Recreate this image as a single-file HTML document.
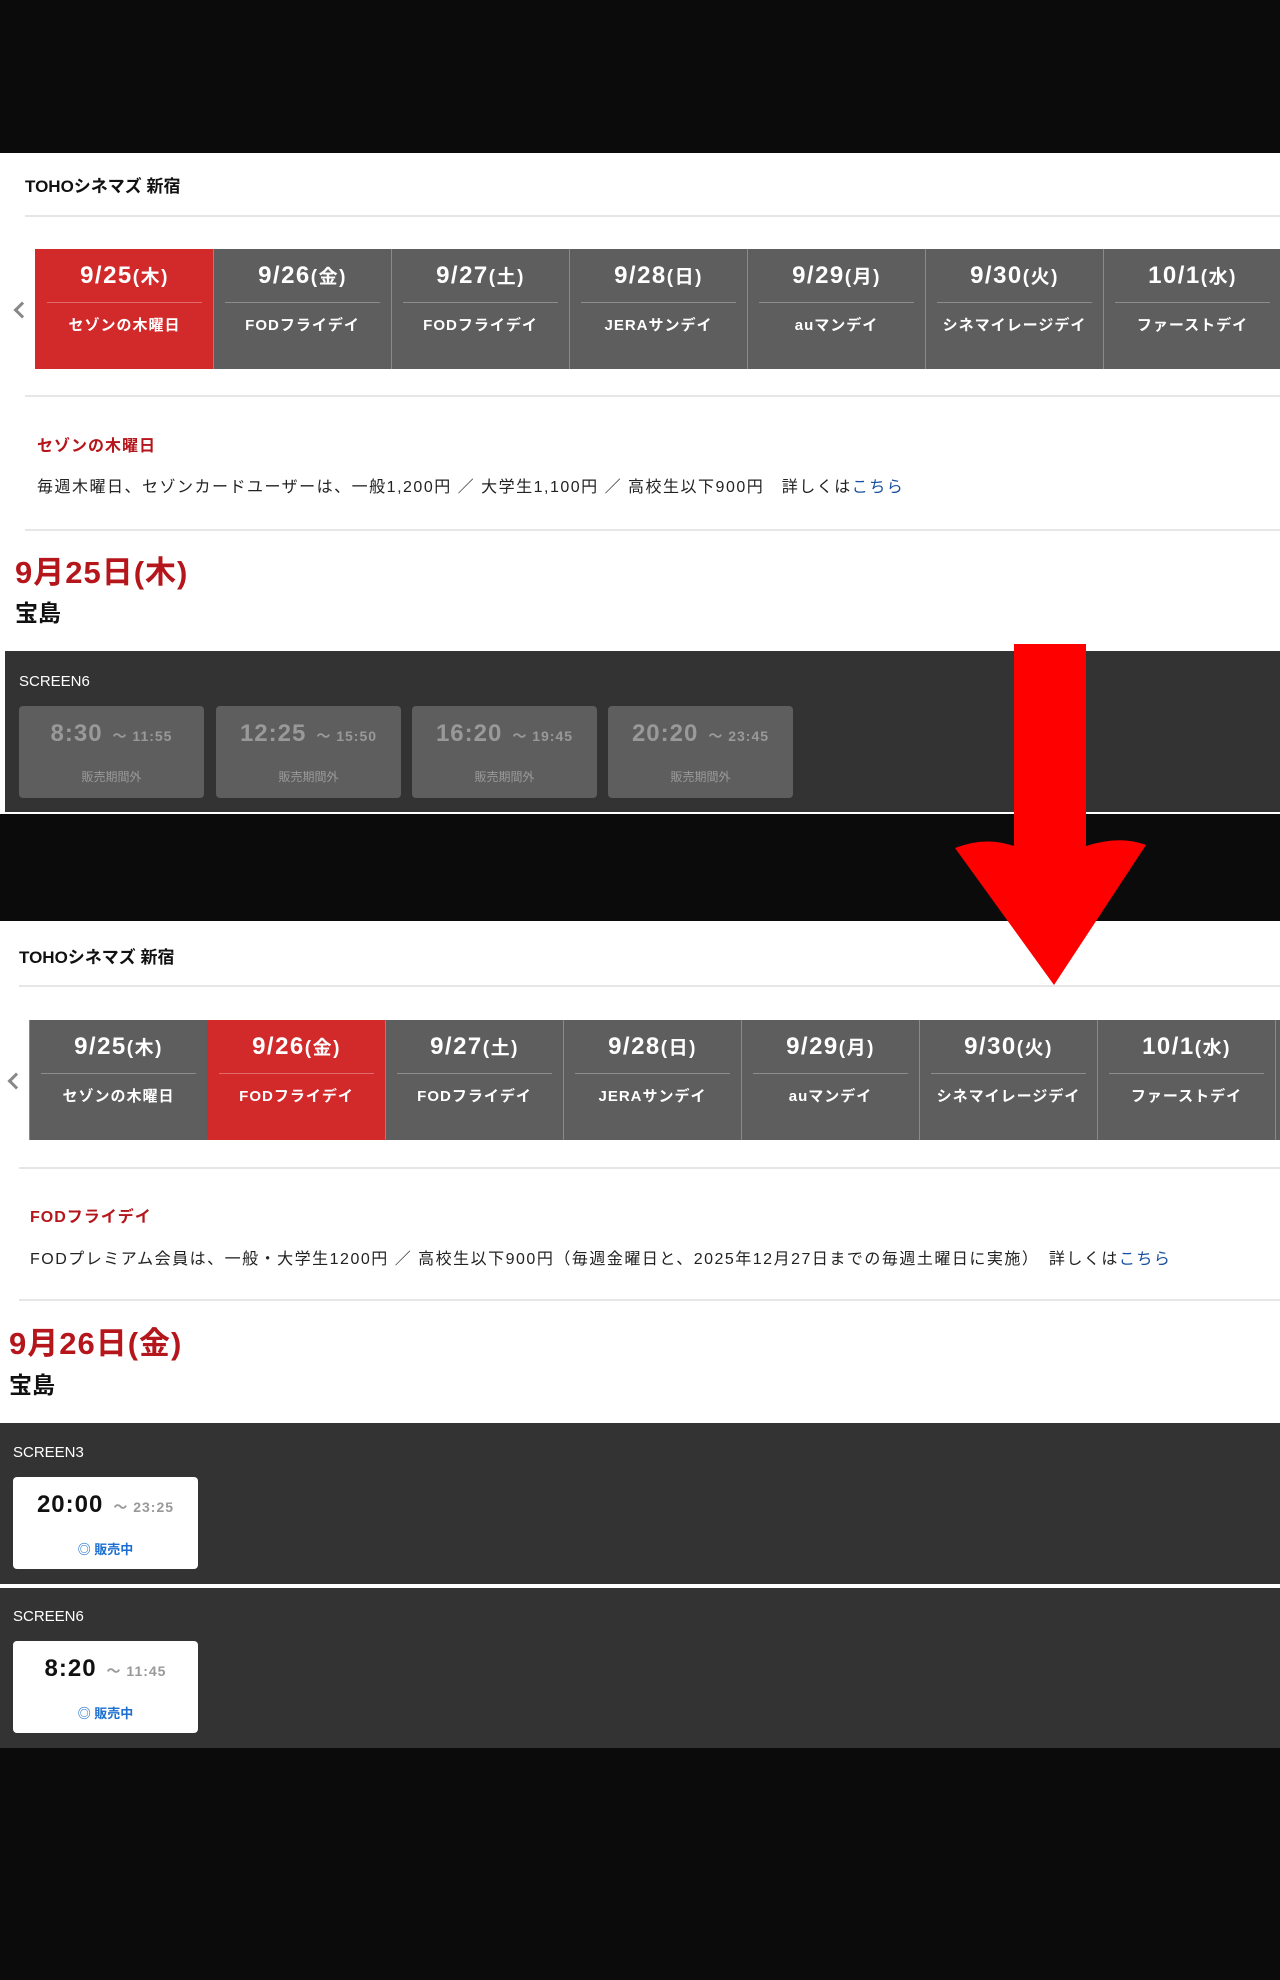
<!DOCTYPE html>
<html><head><meta charset="utf-8"><style>
*{margin:0;padding:0;box-sizing:border-box}
body{width:1280px;height:1980px;background:#0b0b0b;position:relative;overflow:hidden;font-family:"Liberation Sans","Noto Sans CJK JP",sans-serif}
.a{position:absolute}
.white{background:#fff}
.hr{position:absolute;height:2px;background:#e6e6e6}
.title{position:absolute;font-size:17px;font-weight:bold;color:#111}
.tabs{position:absolute;display:flex;height:120px}
.tab{width:178px;height:120px;background:#5e5e5e;border-left:1px solid #8a8a8a;color:#fff;text-align:center;position:relative}
.tab.on{background:#d22a2a;border-left-color:#d22a2a}
.tab .d{position:absolute;top:12px;left:0;right:0;font-size:24px;font-weight:bold;line-height:30px;letter-spacing:1.5px}
.tab .d small{font-size:19px}
.tab .ln{position:absolute;top:53px;left:11px;right:11px;height:1px;background:#8c8c8c}
.tab.on .ln{background:#e36a6a}
.tab .l{position:absolute;top:65px;left:0;right:0;font-size:15px;font-weight:bold;letter-spacing:1px}
.chev{position:absolute;width:12px;height:12px;border-left:3px solid #888;border-bottom:3px solid #888;transform:rotate(45deg)}
.red{position:absolute;color:#b5161b;font-weight:bold;letter-spacing:1px}
.desc{position:absolute;font-size:16px;color:#222;white-space:nowrap;letter-spacing:1.5px}
.desc a{color:#1a4fa0;text-decoration:none}
.big{position:absolute;font-size:31px;font-weight:bold;color:#b5161b;letter-spacing:1px}
.mv{position:absolute;font-size:23px;font-weight:bold;color:#111}
.dark{position:absolute;background:#333}
.scr{position:absolute;color:#fff;font-size:15px}
.card{position:absolute;width:185px;height:92px;border-radius:4px;background:#5e5e5e;color:#999;text-align:center}
.card .t{position:absolute;top:14px;left:0;right:0;font-size:24px;font-weight:bold;white-space:nowrap;letter-spacing:1px}
.card .t span{font-size:14px;margin-left:10px}
.card .s{position:absolute;top:62px;left:0;right:0;font-size:12px}
.card.w{background:#fff}
.card.w .t{color:#111}
.card.w .t span{color:#999}
.card.w .s{color:#1a6fd0;font-weight:bold;font-size:13px}
</style></head><body>

<div class="a white" style="left:0;top:153px;width:1280px;height:661px"></div>
<div class="title" style="left:25px;top:172px">TOHOシネマズ 新宿</div>
<div class="hr" style="left:25px;top:215px;width:1255px"></div>
<div class="chev" style="left:16px;top:304px"></div>
<div class="tabs" style="left:35px;top:249px">
<div class="tab on"><div class="d">9/25<small>(木)</small></div><div class="ln"></div><div class="l">セゾンの木曜日</div></div>
<div class="tab"><div class="d">9/26<small>(金)</small></div><div class="ln"></div><div class="l">FODフライデイ</div></div>
<div class="tab"><div class="d">9/27<small>(土)</small></div><div class="ln"></div><div class="l">FODフライデイ</div></div>
<div class="tab"><div class="d">9/28<small>(日)</small></div><div class="ln"></div><div class="l">JERAサンデイ</div></div>
<div class="tab"><div class="d">9/29<small>(月)</small></div><div class="ln"></div><div class="l">auマンデイ</div></div>
<div class="tab"><div class="d">9/30<small>(火)</small></div><div class="ln"></div><div class="l">シネマイレージデイ</div></div>
<div class="tab"><div class="d">10/1<small>(水)</small></div><div class="ln"></div><div class="l">ファーストデイ</div></div>
</div>
<div class="hr" style="left:25px;top:395px;width:1255px"></div>
<div class="red" style="left:37px;top:432px;font-size:16px">セゾンの木曜日</div>
<div class="desc" style="left:37px;top:473px">毎週木曜日、セゾンカードユーザーは、一般1,200円 ／ 大学生1,100円 ／ 高校生以下900円　詳しくは<a>こちら</a></div>
<div class="hr" style="left:25px;top:529px;width:1255px"></div>
<div class="big" style="left:15px;top:547px">9月25日(木)</div>
<div class="mv" style="left:15px;top:594px">宝島</div>
<div class="dark" style="left:5px;top:651px;width:1275px;height:161px"></div>
<div class="scr" style="left:19px;top:673px">SCREEN6</div>
<div class="card" style="left:19px;top:706px"><div class="t">8:30<span>～ 11:55</span></div><div class="s">販売期間外</div></div>
<div class="card" style="left:216px;top:706px"><div class="t">12:25<span>～ 15:50</span></div><div class="s">販売期間外</div></div>
<div class="card" style="left:412px;top:706px"><div class="t">16:20<span>～ 19:45</span></div><div class="s">販売期間外</div></div>
<div class="card" style="left:608px;top:706px"><div class="t">20:20<span>～ 23:45</span></div><div class="s">販売期間外</div></div>

<div class="a white" style="left:0;top:921px;width:1280px;height:502px"></div>
<div class="title" style="left:19px;top:943px">TOHOシネマズ 新宿</div>
<div class="hr" style="left:19px;top:985px;width:1261px"></div>
<div class="chev" style="left:10px;top:1075px"></div>
<div class="tabs" style="left:29px;top:1020px">
<div class="tab"><div class="d">9/25<small>(木)</small></div><div class="ln"></div><div class="l">セゾンの木曜日</div></div>
<div class="tab on"><div class="d">9/26<small>(金)</small></div><div class="ln"></div><div class="l">FODフライデイ</div></div>
<div class="tab"><div class="d">9/27<small>(土)</small></div><div class="ln"></div><div class="l">FODフライデイ</div></div>
<div class="tab"><div class="d">9/28<small>(日)</small></div><div class="ln"></div><div class="l">JERAサンデイ</div></div>
<div class="tab"><div class="d">9/29<small>(月)</small></div><div class="ln"></div><div class="l">auマンデイ</div></div>
<div class="tab"><div class="d">9/30<small>(火)</small></div><div class="ln"></div><div class="l">シネマイレージデイ</div></div>
<div class="tab"><div class="d">10/1<small>(水)</small></div><div class="ln"></div><div class="l">ファーストデイ</div></div>
<div class="tab" style="width:20px"></div>
</div>
<div class="hr" style="left:19px;top:1167px;width:1261px"></div>
<div class="red" style="left:30px;top:1203px;font-size:16px">FODフライデイ</div>
<div class="desc" style="left:30px;top:1245px">FODプレミアム会員は、一般・大学生1200円 ／ 高校生以下900円（毎週金曜日と、2025年12月27日までの毎週土曜日に実施）　詳しくは<a>こちら</a></div>
<div class="hr" style="left:19px;top:1299px;width:1261px"></div>
<div class="big" style="left:9px;top:1318px">9月26日(金)</div>
<div class="mv" style="left:9px;top:1366px">宝島</div>
<div class="dark" style="left:0;top:1423px;width:1280px;height:161px"></div>
<div class="a" style="left:0;top:1584px;width:1280px;height:4px;background:#fff"></div>
<div class="dark" style="left:0;top:1588px;width:1280px;height:160px"></div>
<div class="scr" style="left:13px;top:1444px">SCREEN3</div>
<div class="card w" style="left:13px;top:1477px"><div class="t">20:00<span>～ 23:25</span></div><div class="s">◎ 販売中</div></div>
<div class="scr" style="left:13px;top:1608px">SCREEN6</div>
<div class="card w" style="left:13px;top:1641px"><div class="t">8:20<span>～ 11:45</span></div><div class="s">◎ 販売中</div></div>

<svg class="a" style="left:0;top:0" width="1280" height="1980">
<path d="M1014 644 L1086 644 L1086 846 Q1120 835 1146 845 L1054 985 L955 848 Q985 836 1014 846 Z" fill="#ff0000"/>
</svg>
</body></html>
